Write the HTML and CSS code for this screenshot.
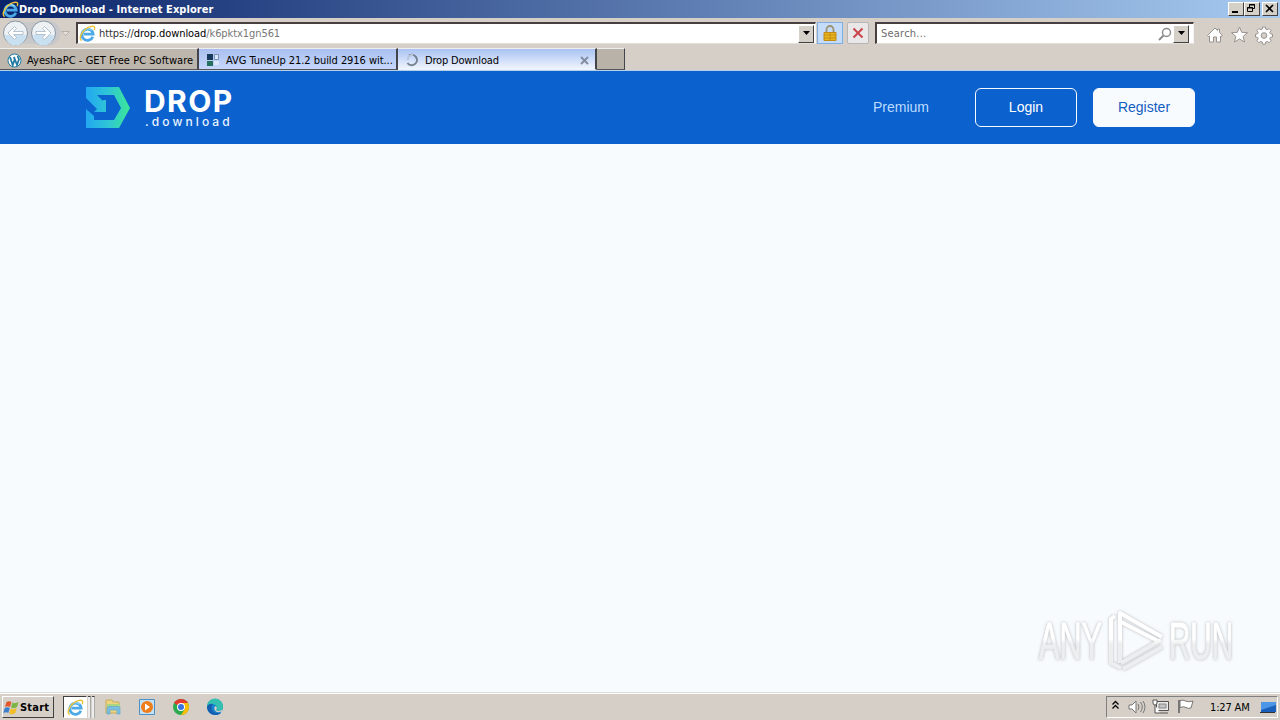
FILE: index.html
```
<!DOCTYPE html>
<html lang="en">
<head>
    <meta charset="utf-8">
    <title>Drop Download</title>
    <link rel="stylesheet" href="styles.css">
</head>
<body>
    <!-- shared icons -->
    <svg class="defs">
        <symbol id="ie" viewBox="0 0 16 16">
            <path d="M13 11A5.300 5.300 0 1 1 13.300 8.600H4.500" fill="none" stroke="#4aa9e6" stroke-width="2.600"/>
            <path d="M3 7.800A5.300 5.200 0 0 1 12 5" fill="none" stroke="#8ed6f8" stroke-width="1.200"/>
            <path d="M2.500 14.800C-1.500 12.600 4 3.600 10.500 1.600c4-1.300 5 .5 3.800 3.200" fill="none" stroke="#eec338" stroke-width="1.300"/>
        </symbol>
    </svg>

    <div class="titlebar">
        <svg class="title-icon" width="17" height="17"><use href="#ie"/></svg>
        <span class="title-text">Drop Download - Internet Explorer</span>
        <div class="win-btns">
            <div class="win-btn"><svg width="13" height="11"><path d="M3 8h6v2H3z"/></svg></div>
            <div class="win-btn"><svg width="13" height="11" fill="none" stroke="#000"><path d="M4.500 4V1.500h5v4H8M4 2h6M2.500 4.500h5v4h-5zM2 5h6"/></svg></div>
            <div class="win-btn close"><svg width="13" height="11"><path d="M3 2l7 7M10 2L3 9" stroke="#000" stroke-width="1.600"/></svg></div>
        </div>
    </div>

    <div class="navbar">
        <svg class="back-fwd" width="72" height="30" viewBox="0 0 72 30">
            <path d="M10 2.500Q29 6 48 2.500a12.500 12.500 0 0 1 0 25Q29 24 10 27.500z" fill="#c8c8ca"/>
            <g fill="#eef1f4" stroke="#8795a5">
                <circle cx="15.500" cy="15" r="12"/>
                <circle cx="43.500" cy="15" r="12"/>
            </g>
            <path d="M5 17a10.500 10.500 0 0 0 21 0zM33 17a10.500 10.500 0 0 0 21 0z" fill="#c9e0f0"/>
            <path d="M8 15l6.500-6.500 2 2-3 3h9.500v3h-9.500l3 3-2 2zM51 15l-6.500-6.500-2 2 3 3H36v3h9.500l-3 3 2 2z" fill="#fff" stroke="#a3b4c4" stroke-width=".8"/>
            <path d="M61.500 13.500h8l-4 4z" fill="#e4e0dc" stroke="#b5afa9"/>
        </svg>
        <div class="address">
            <svg width="17" height="17"><use href="#ie"/></svg>
            <span class="url"><i>https://</i><b>drop.download</b><i>/k6pktx1gn561</i></span>
            <div class="drop-btn"><svg width="9" height="5"><path d="M1 0h7L4.500 4z"/></svg></div>
        </div>
        <div class="tool-btn lock">
            <svg width="14" height="17" viewBox="0 0 14 17">
                <path d="M3.500 8V4.500a3.500 3.500 0 0 1 7 0V8" fill="none" stroke="#9b936f" stroke-width="1.800"/>
                <path d="M1 7.500h12v8H1z" fill="#e9b51d" stroke="#c18b16"/>
                <path d="M1 10h12M1 13h12M7 8v7" stroke="#bb8614" stroke-width=".8"/>
            </svg>
        </div>
        <div class="tool-btn stop">
            <svg width="12" height="12"><path d="M1.500 1.500l9 9M10.500 1.500l-9 9" stroke="#c9454c" stroke-width="2"/></svg>
        </div>
        <div class="search">
            <span>Search...</span>
            <svg width="14" height="14"><circle cx="8.500" cy="5.500" r="4" fill="none" stroke="#8c8c8c" stroke-width="1.500"/><path d="M5.500 8.500L1 13" stroke="#8c8c8c" stroke-width="2"/></svg>
            <div class="drop-btn"><svg width="9" height="5"><path d="M1 0h7L4.500 4z"/></svg></div>
        </div>
        <svg class="tools" width="68" height="20" viewBox="0 0 68 20" fill="#fff" stroke="#98928e">
            <path d="M1.500 10.500L9 3l2.500 2.500V4h2v3.500l3 3-1.500 1-.5-.5v6h-4v-5h-3v5h-4v-6l-1 .5z"/>
            <path d="M33.500 2l2.200 5.300 5.800.4-4.400 3.700 1.400 5.600-5-3-5 3 1.400-5.600-4.400-3.700 5.800-.4z"/>
            <path d="M56.600 2h2.800l.4 2.200 1.400.6 1.900-1.300 2 2-1.300 1.900.6 1.400 2.100.4v2.800l-2.100.4-.6 1.400 1.300 1.900-2 2-1.900-1.300-1.400.6-.4 2.200h-2.800l-.4-2.200-1.400-.6-1.900 1.300-2-2 1.300-1.900-.6-1.400-2.100-.4V9.200l2.100-.4.6-1.400-1.300-1.900 2-2 1.900 1.300 1.400-.6z"/>
            <circle cx="58" cy="10.500" r="2.800" fill="#d5cfc8"/>
        </svg>
    </div>

    <div class="tabs">
        <div class="tab first">
            <svg width="15" height="15" viewBox="0 0 15 15">
                <circle cx="7.500" cy="7.500" r="6.500" fill="#fff" stroke="#207aa1"/>
                <path d="M3 4l2.700 8 2-5.500L6.800 4M7 4l3 8 2-5.600L10.500 3" fill="none" stroke="#207aa1" stroke-width="1.800"/>
            </svg>
            <span class="t1">AyeshaPC - GET Free PC Software</span>
        </div>
        <div class="tab second">
            <svg width="14" height="14"><path d="M1 1h6v6H1z" fill="#173a5c"/><path d="M1 8h6v5H1z" fill="#24705f"/><path d="M8.500 1.500h4v5h-4z" fill="#dbe8fa" stroke="#7b94bd"/><path d="M8 8h5v4H8z" fill="#dce6fb"/></svg>
            <span class="t2">AVG TuneUp 21.2 build 2916 wit...</span>
        </div>
        <div class="tab active">
            <svg width="14" height="14"><path d="M4 2.500A5.200 5.200 0 1 1 2.500 10" fill="none" stroke="#76818f" stroke-width="2"/><path d="M7 1.800A5.200 5.200 0 0 0 1.800 7" fill="none" stroke="#b9c6dc" stroke-width="2" transform="translate(1)"/></svg>
            <span class="t3">Drop Download</span>
            <svg class="tab-close" width="9" height="9"><path d="M1 1l7 7M8 1L1 8" stroke="#808b9d" stroke-width="1.800"/></svg>
        </div>
        <div class="tab new"></div>
    </div>

    <header class="site-header">
        <div class="logo">
            <svg width="46" height="46" viewBox="0 0 46 46">
                <defs>
                    <linearGradient id="lg" x1="0" y1="0" x2="1" y2="0">
                        <stop offset="0" stop-color="#22a7f2"/>
                        <stop offset=".5" stop-color="#2fc5d6"/>
                        <stop offset="1" stop-color="#3be896"/>
                    </linearGradient>
                </defs>
                <path fill="url(#lg)" d="M1 2h33l11 21-11 20H1V24l8 7v4h20l7-12-7-13H12l6 6v-1h3v12H9l3-3L1 13z"/>
            </svg>
            <div class="logo-text">
                <div class="logo-name">DROP</div>
                <div class="logo-sub">.download</div>
            </div>
        </div>
        <nav>
            <a class="premium">Premium</a>
            <a class="btn login">Login</a>
            <a class="btn register">Register</a>
        </nav>
    </header>

    <main class="page">
        <svg class="watermark" width="210" height="72" viewBox="0 0 210 72">
            <defs>
                <linearGradient id="wm" gradientUnits="userSpaceOnUse" x1="0" y1="34" x2="0" y2="39">
                    <stop offset="0" stop-color="#fff"/>
                    <stop offset="1" stop-color="#eceeef"/>
                </linearGradient>
            </defs>
            <g class="wm-shape">
                <text x="9" y="54" textLength="63" lengthAdjust="spacingAndGlyphs">ANY</text>
                <text x="139" y="54" textLength="64" lengthAdjust="spacingAndGlyphs">RUN</text>
                <path d="M85 11l-4 3v44l10 5M90 58V8l42 24M91 17l37 19M91 58l40-23M93 64l39-22"/>
            </g>
        </svg>
    </main>

    <div class="taskbar">
        <div class="start">
            <svg width="17" height="17" viewBox="0 0 17 17">
                <path d="M3.500 3Q6 1.500 8.500 3L7 8Q4.500 6.500 2 8z" fill="#e4572b"/>
                <path d="M9.500 3.500Q12 5 15.500 3L14 8q-3 2-6 .5z" fill="#7bb543"/>
                <path d="M1.800 9q2.500-1.500 5 0l-1.500 5q-2-1.500-5 0z" fill="#3c7fce"/>
                <path d="M7.800 9.500q3 1.500 6-.5l-1.500 5q-3 2-6 .5z" fill="#f3bd25"/>
            </svg>
            <span>Start</span>
        </div>
        <div class="task-ie"><div class="task-on"><svg width="17" height="17"><use href="#ie"/></svg></div><i></i><i></i></div>
        <svg class="quick" width="120" height="20" viewBox="0 0 120 20">
            <!-- explorer -->
            <path d="M2 3h6l1 2h6v11H2z" fill="#edd481" stroke="#c8ab58"/>
            <path d="M3 7h13v3H3z" fill="#a9d584"/>
            <path d="M3 17v-6q0-1.500 1.500-1.500h10q1.500 0 1.500 1.500v6h-3v-4H6v4z" fill="#79bfe0" stroke="#68a6c7" stroke-width=".7"/>
            <!-- media player -->
            <path d="M35.500 2.500h15v15h-15z" fill="#c6e0f4" stroke="#4b91c7"/>
            <circle cx="43" cy="10" r="6" fill="#ef7d1a"/>
            <path d="M41 6.500l5 3.500-5 3.500z" fill="#fff"/>
            <!-- chrome -->
            <circle cx="77" cy="10" r="8" fill="#2da94f"/>
            <path d="M77 10L70.100 6a8 8 0 0 1 13.800 0z" fill="#e33b2e"/>
            <path d="M77 6h6.900A8 8 0 0 1 77 18l4-6z" fill="#fdbd00"/>
            <circle cx="77" cy="10" r="4" fill="#fff"/>
            <circle cx="77" cy="10" r="3" fill="#3873e0"/>
            <!-- edge -->
            <circle cx="111" cy="10" r="8" fill="#1683cf"/>
            <path d="M103 9a8 8 0 0 1 16 1c0 4-5 4.500-7 3 2-3 0-6-4-6q-3 0-5 2z" fill="#35bfb0"/>
            <path d="M103 10q2-4 6-3c-3 3-1 9 4 9h4c-6 5-14 0-14-6z" fill="#155eaf"/>
            <path d="M111 9q3 1 1 4 3 2 6.500-.5l-.8 2q-5 2-7-1.500-1-2 .3-4z" fill="#d5cfc8"/>
        </svg>
        <div class="tray">
            <svg width="82" height="18" viewBox="0 0 82 18" fill="none" stroke="#777">
                <path d="M2.500 6.500l3-3 3 3M2.500 10.500l3-3 3 3" stroke="#000" stroke-width="1.300"/>
                <path d="M19 7h3l4-4v12l-4-4h-3z" fill="#fff"/>
                <path d="M28 6q2 3 0 6M30.500 4q3.500 5 0 10M33 3q4 6 0 12"/>
                <path d="M46.500 3.500h12v9h-12zM50 15h8" fill="#e9e9e9" stroke="#555"/>
                <path d="M49 6h7v4h-7z" fill="#c4c4c4" stroke="#888"/>
                <path d="M43 2v3q0 2 2 2t2-2V2zM45 7v8h5" fill="#fff" stroke="#555"/>
                <path d="M69 2v13" stroke-width="2"/>
                <path d="M70 2.500q3-1 5.500.5t7.500 0L81 10q-3 1-5-.5t-6 0z" fill="#fff"/>
            </svg>
            <span>1:27 AM</span>
            <svg width="16" height="15" viewBox="0 0 16 15"><path d="M1 2h15v10H1z" fill="#1c5fba"/><path d="M1 2h15v3L1 10z" fill="#4b96e6"/><path d="M0 12.500h15" stroke="#333"/></svg>
        </div>
    </div>
</body>
</html>
```
FILE: styles.css
```
*{
    box-sizing: border-box;
    margin: 0;
    padding: 0;
}
body{
    width: 1280px;
    height: 720px;
    overflow: hidden;
    display: flex;
    flex-direction: column;
    background: #d4d0c8;
    font-family: "DejaVu Sans Condensed", "DejaVu Sans", sans-serif;
    font-size: 11px;
    color: #000;
    white-space: nowrap;
}
svg{
    display: block;
    flex: none;
    overflow: visible;
}
.defs{
    width: 0;
    height: 0;
    position: absolute;
}

/* title bar */
.titlebar{
    height: 18px;
    display: flex;
    align-items: center;
    padding: 0 2px;
    background: linear-gradient(to right, #0a246a, #a6caf0);
}
.title-text{
    color: #fff;
    font-weight: bold;
    letter-spacing: 0.06px;
}
.win-btns{
    display: flex;
    margin-left: auto;
}
.win-btn{
    width: 16px;
    height: 14px;
    background: #d4d0c8;
    border: 1px solid;
    border-color: #fff #404040 #404040 #fff;
}
.close{
    margin-left: 2px;
}

/* address bar */
.navbar{
    height: 30px;
    display: flex;
    align-items: center;
    background: #d5cfc8;
}
.back-fwd{
    margin-right: 4px;
}
.address, .search{
    height: 22px;
    display: flex;
    align-items: center;
    background: #fff;
    border: 1px solid;
    border-width: 2px 1px 1px 2px;
    border-color: #484040 #f5f3f0 #e5dfd9 #484040;
}
.address{
    width: 740px;
    padding-left: 1px;
}
.url{
    margin-left: 3px;
    letter-spacing: -0.08px;
}
.url i{
    font-style: normal;
    color: #777;
}
.url i:first-child{
    color: #333;
}
.url b{
    font-weight: normal;
}
.drop-btn{
    width: 16px;
    height: 18px;
    display: flex;
    align-items: center;
    justify-content: center;
    background: #d4d0c8;
    border: 1px solid;
    border-color: #fff #404040 #404040 #fff;
}
.address .drop-btn{
    margin-left: auto;
    margin-right: 1px;
}
.tool-btn{
    height: 22px;
    display: flex;
    align-items: center;
    justify-content: center;
    border: 1px solid #b7b5b8;
}
.lock{
    width: 26px;
    margin-left: 1px;
    background: #c5dcf8;
    border-color: #7eaee4;
}
.stop{
    width: 22px;
    margin-left: 4px;
    background: #e9e7e8;
    border-radius: 2px;
}
.search{
    width: 319px;
    margin-left: 6px;
    padding: 0 4px 0 4px;
    color: #6d6d6d;
}
.search span{
    flex: 1;
    letter-spacing: 0.22px;
}
.search .drop-btn{
    margin-left: 1px;
}
.tools{
    margin: 3px 0 0 12px;
}

/* tabs */
.tabs{
    height: 23px;
    display: flex;
    background: #d5cfc8;
    border-bottom: 1px solid #b5d0ea;
}
.tab{
    width: 199px;
    height: 22px;
    display: flex;
    align-items: center;
    padding: 2px 0 0 7px;
    border-right: 2px solid #44454b;
    border-bottom: 1px solid #55565c;
    border-top: 1px solid #eee;
}
.tab span{
    margin-left: 6px;
}
.tab .t1{
    margin-left: 5px;
    letter-spacing: 0.04px;
}
.first{
    background: #bdb6ad;
}
.second{
    background: linear-gradient(#a9bff0, #c6d7fa);
}
.t2{
    letter-spacing: -0.05px;
}
.active{
    padding-right: 6px;
    background: linear-gradient(#a9c3f3, #f0f5fe);
    border-bottom-color: #e9f2ff;
}
.t3{
    letter-spacing: -0.18px;
}
.tab-close{
    margin-left: auto;
}
.new{
    width: 28px;
    background: #b9b2a8;
    border-right-width: 1px;
}

/* site */
.site-header{
    height: 73px;
    display: flex;
    align-items: center;
    justify-content: space-between;
    padding: 0 85px;
    background: #0b61ce;
}
.logo{
    display: flex;
}
.logo-text{
    margin: 4px 0 0 13px;
}
.logo-name{
    font: bold 30px/24px Inter, sans-serif;
    letter-spacing: 1.4px;
    color: #fff;
}
.logo-sub{
    margin-left: 1px;
    font: 500 12px/18px Inter, sans-serif;
    letter-spacing: 3.1px;
    color: #e8f4ff;
}
nav{
    display: flex;
    align-items: center;
    font-family: "Liberation Sans", Arial, sans-serif;
    font-size: 14px;
}
.premium{
    margin: 0 46px 2px 0;
    color: #bcdcff;
}
.btn{
    width: 102px;
    height: 39px;
    line-height: 37px;
    text-align: center;
    border: 1px solid #f8fbfe;
    border-radius: 6px;
    color: #fff;
}
.register{
    margin-left: 16px;
    background: #f8fbfe;
    color: #145dc0;
}
.page{
    flex: 1;
    display: flex;
    align-items: flex-end;
    justify-content: flex-end;
    padding: 0 40px 15px 0;
    background: #f8fbfe;
}
.wm-shape{
    fill: none;
    stroke: url(#wm);
    stroke-width: 4;
    stroke-linejoin: round;
    filter: drop-shadow(0 0 1.5px #b4b8ba);
}
.wm-shape text{
    font: 51px "Liberation Sans", Arial, sans-serif;
    fill: url(#wm);
    stroke-width: 1;
}

/* taskbar */
.taskbar{
    height: 28px;
    display: flex;
    align-items: center;
    padding: 1px 2px 0;
    background: #d5cfc8;
    border-top: 1px solid #e0dcd7;
    box-shadow: inset 0 1px #fff;
}
.start{
    width: 52px;
    height: 22px;
    display: flex;
    align-items: center;
    border: 1px solid;
    border-color: #fff #404040 #404040 #fff;
    font-weight: bold;
    letter-spacing: 0.2px;
}
.task-ie{
    height: 22px;
    display: flex;
    margin-left: 9px;
}
.task-on{
    width: 24px;
    padding: 2px 0 0 3px;
    background: #fff;
    border: 1px solid;
    border-color: #404040 #fff #fff #404040;
}
.task-ie i{
    width: 3px;
    margin-left: 1px;
    border-top: 1px solid #404040;
    border-right: 1px solid #aaa;
    background: #eee;
}
.quick{
    margin-left: 9px;
}
.tray{
    width: 172px;
    height: 22px;
    display: flex;
    align-items: center;
    margin-left: auto;
    padding-left: 3px;
    border: 1px solid;
    border-color: #808080 #fff #fff #808080;
}
.tray span{
    width: 41px;
    margin: 0 9px 0 18px;
    letter-spacing: -0.15px;
}
```
